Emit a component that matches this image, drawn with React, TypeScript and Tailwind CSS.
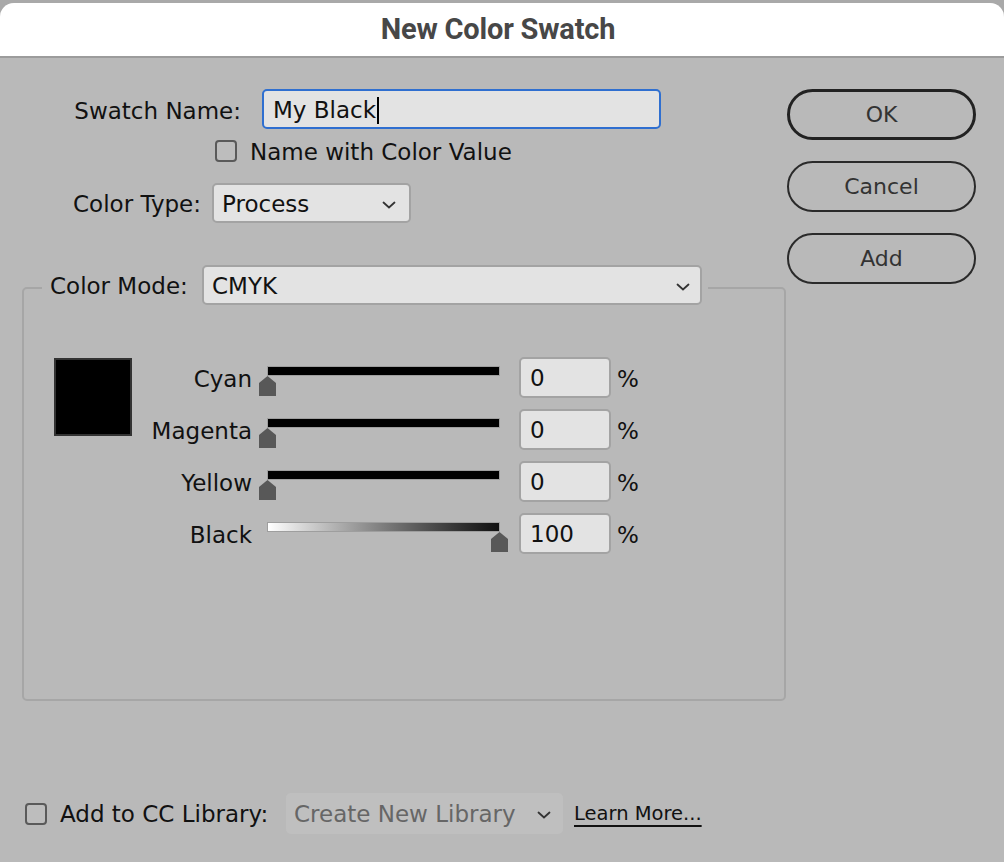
import React from "react";

const font = { fontFamily: '"DejaVu Sans", "Noto Sans", sans-serif' };

function Chevron({ className = "" }: { className?: string }) {
  return (
    <svg width="14" height="8" viewBox="0 0 14 8" className={className}>
      <path d="M1.5 1.5 L7 6.5 L12.5 1.5" fill="none" stroke="#333" strokeWidth="1.8" strokeLinecap="round" />
    </svg>
  );
}

function Checkbox() {
  return <div className="h-[22px] w-[22px] shrink-0 rounded-[4px] border-2 border-[#5a5a5a] bg-[#bdbdbd]" />;
}

function Thumb() {
  return (
    <svg width="17" height="20" viewBox="0 0 17 20">
      <path d="M8.5 0 L17 7 L17 20 L0 20 L0 7 Z" fill="#585858" />
    </svg>
  );
}

type Row = { label: string; value: string; pos: "start" | "end"; gradient?: boolean };

const rows: Row[] = [
  { label: "Cyan", value: "0", pos: "start" },
  { label: "Magenta", value: "0", pos: "start" },
  { label: "Yellow", value: "0", pos: "start" },
  { label: "Black", value: "100", pos: "end", gradient: true },
];

function SliderRow({ row }: { row: Row }) {
  return (
    <div className="flex h-[41px] items-start">
      <div className="w-[120px] whitespace-nowrap pt-[9px] text-right leading-[26px]">{row.label}</div>
      <div className="relative h-[41px] w-[267px]">
        {/* track */}
        <div
          className={`absolute left-[15px] top-[9px] h-[10px] w-[233px] border border-[#9e9e9e] ${
            row.gradient ? "bg-gradient-to-r from-white to-[#111]" : "bg-black"
          }`}
        />
        <div className={`absolute top-[19px] ${row.pos === "start" ? "left-[7px]" : "left-[239px]"}`}>
          <Thumb />
        </div>
      </div>
      <div className="flex h-[41px] w-[92px] items-center rounded-[5px] border-2 border-[#a3a3a3] bg-[#e3e3e3] pl-[9px] pt-[2px]">
        {row.value}
      </div>
      <div className="pl-[6px] pt-[9px] leading-[26px]">%</div>
    </div>
  );
}

export default function App() {
  return (
    <div className="h-[862px] w-[1004px] overflow-hidden bg-[#a9a9a9] pt-[3px]" style={font}>
      <div className="h-[859px] overflow-hidden rounded-t-[14px] bg-[#b9b9b9]">
        {/* Title bar */}
        <div className="flex h-[55px] items-center justify-center border-b-2 border-[#9c9c9c] bg-white pr-[8px]">
          <span
            className="text-[29px] font-bold tracking-[-0.2px] text-[#474747]"
            style={{ fontFamily: 'Roboto, "Noto Sans", sans-serif' }}
          >
            New Color Swatch
          </span>
        </div>

        <div className="flex text-[23px] text-[#111]">
          {/* Left column */}
          <div className="w-[787px]">
            <div className="mt-[31px] flex h-[40px] items-center">
              <div className="w-[241px] whitespace-nowrap pt-[4px] text-right">Swatch Name:</div>
              <div className="ml-[21px] flex h-[40px] w-[399px] items-center rounded-[5px] border-2 border-[#2f6fd0] bg-[#e3e3e3] pl-[9px] pt-[3px]">
                My Black
                <span className="ml-[1px] inline-block h-[27px] w-[2px] bg-black" />
              </div>
            </div>

            <div className="mt-[11px] flex h-[22px] items-center pl-[215px]">
              <Checkbox />
              <span className="ml-[13px] whitespace-nowrap pt-[3px]">Name with Color Value</span>
            </div>

            <div className="mt-[21px] flex h-[40px] items-center">
              <div className="w-[201px] whitespace-nowrap pt-[3px] text-right">Color Type:</div>
              <div className="ml-[11px] flex h-[40px] w-[199px] items-center justify-between rounded-[5px] border-2 border-[#a3a3a3] bg-[#e3e3e3] pl-[8px] pr-[13px] pt-[3px]">
                Process
                <Chevron />
              </div>
            </div>

            {/* Color Mode group */}
            <div className="mt-[42px] pl-[22px]">
              <div className="relative z-10 ml-[20px] flex h-[40px] w-[666px] items-center bg-[#b9b9b9] pl-[8px]">
                <span className="w-[140px] whitespace-nowrap pt-[3px]">Color Mode:</span>
                <div className="ml-[12px] flex h-[40px] w-[500px] items-center justify-between rounded-[5px] border-2 border-[#a3a3a3] bg-[#e3e3e3] pl-[8px] pr-[10px] pt-[3px]">
                  CMYK
                  <Chevron />
                </div>
              </div>
              <div className="-mt-[18px] h-[414px] w-[764px] rounded-[5px] border-2 border-[#a6a6a6]">
                <div className="flex pl-[30px] pt-[68px]">
                  <div className="mt-[1px] h-[78px] w-[78px] border-2 border-[#333] bg-black" />
                  <div className="flex flex-col gap-[11px]">
                    {rows.map((r) => (
                      <SliderRow key={r.label} row={r} />
                    ))}
                  </div>
                </div>
              </div>
            </div>

            {/* Bottom row */}
            <div className="mt-[92px] flex h-[41px] items-center pl-[25px]">
              <Checkbox />
              <span className="ml-[13px] w-[213px] whitespace-nowrap pt-[2px]">Add to CC Library:</span>
              <div className="ml-[13px] flex h-[41px] w-[277px] items-center justify-between rounded-[5px] bg-[#bfbfbf] pl-[8px] pr-[12px] pt-[2px] text-[#666]">
                Create New Library
                <Chevron />
              </div>
              <span className="ml-[11px] whitespace-nowrap text-[19.5px] underline decoration-2 underline-offset-[5px]">
                Learn More...
              </span>
            </div>
          </div>

          {/* Buttons */}
          <div className="flex w-[189px] flex-col pt-[31px] text-[22px] text-[#333]">
            <button className="flex h-[51px] items-center justify-center rounded-full border-[3px] border-[#222]">
              OK
            </button>
            <button className="mt-[21px] flex h-[51px] items-center justify-center rounded-full border-2 border-[#2a2a2a]">
              Cancel
            </button>
            <button className="mt-[21px] flex h-[51px] items-center justify-center rounded-full border-2 border-[#2a2a2a]">
              Add
            </button>
          </div>
        </div>
      </div>
    </div>
  );
}
